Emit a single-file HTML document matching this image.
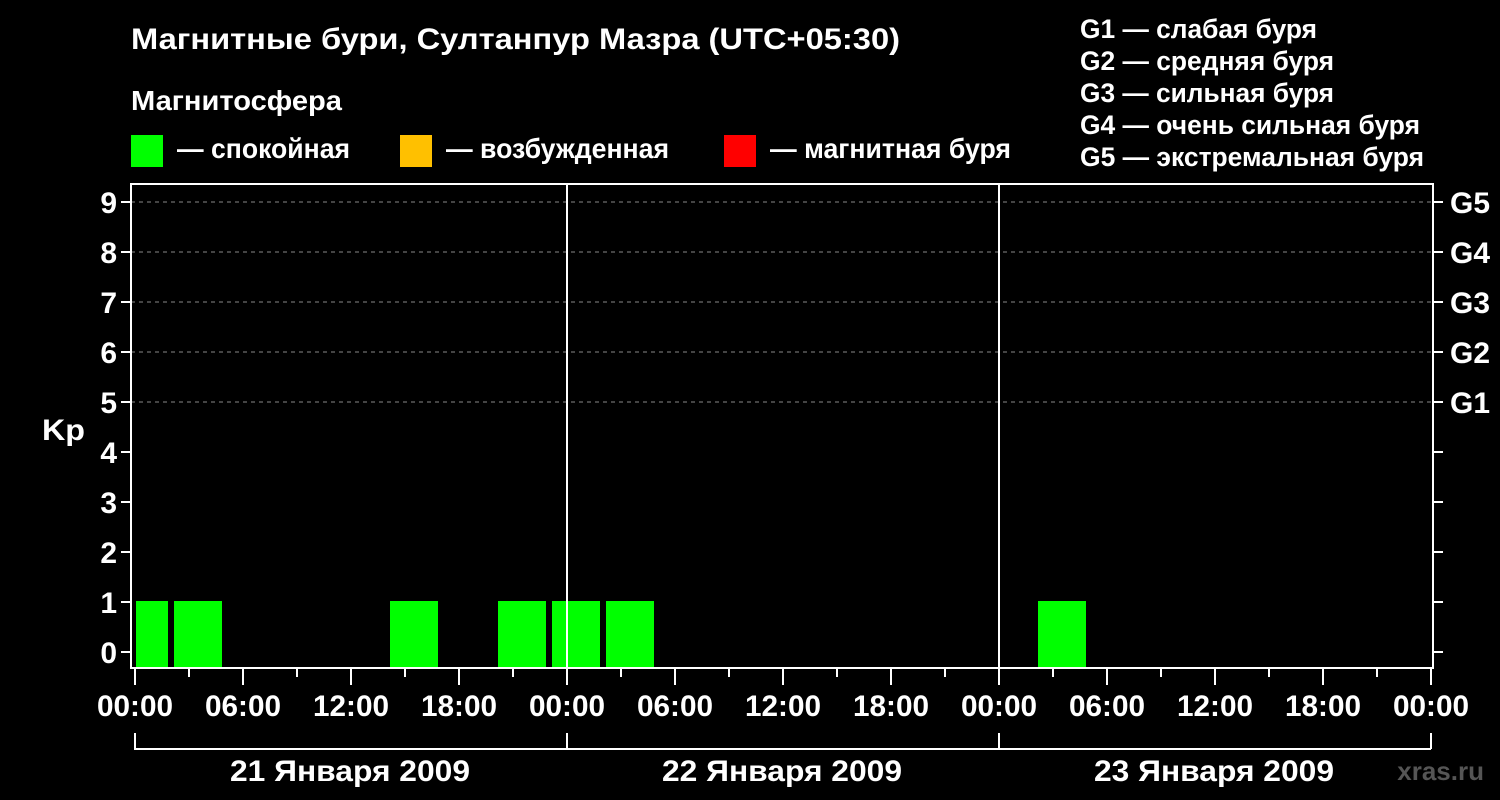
<!DOCTYPE html>
<html><head><meta charset="utf-8"><style>
html,body{margin:0;padding:0;background:#000;width:1500px;height:800px;overflow:hidden}
svg{display:block}
text{font-family:"Liberation Sans",sans-serif;font-weight:bold;fill:#fff}
</style></head><body>
<svg width="1500" height="800" xmlns="http://www.w3.org/2000/svg">
<rect width="1500" height="800" fill="#000"/>
<text x="131" y="49" font-size="30" textLength="769" lengthAdjust="spacingAndGlyphs">Магнитные бури, Султанпур Мазра (UTC+05:30)</text>
<text x="131" y="110" font-size="28" textLength="211" lengthAdjust="spacingAndGlyphs">Магнитосфера</text>
<rect x="131" y="135" width="32" height="32" fill="#00ff00"/>
<text x="177" y="158" font-size="28" textLength="173" lengthAdjust="spacingAndGlyphs">— спокойная</text>
<rect x="400" y="135" width="32" height="32" fill="#ffc000"/>
<text x="446" y="158" font-size="28" textLength="223" lengthAdjust="spacingAndGlyphs">— возбужденная</text>
<rect x="724" y="135" width="32" height="32" fill="#ff0000"/>
<text x="770" y="158" font-size="28" textLength="241" lengthAdjust="spacingAndGlyphs">— магнитная буря</text>
<g font-size="27">
<text x="1080" y="38" textLength="237" lengthAdjust="spacingAndGlyphs">G1 — слабая буря</text>
<text x="1080" y="70" textLength="254" lengthAdjust="spacingAndGlyphs">G2 — средняя буря</text>
<text x="1080" y="102" textLength="254" lengthAdjust="spacingAndGlyphs">G3 — сильная буря</text>
<text x="1080" y="134" textLength="340" lengthAdjust="spacingAndGlyphs">G4 — очень сильная буря</text>
<text x="1080" y="166" textLength="344" lengthAdjust="spacingAndGlyphs">G5 — экстремальная буря</text>
</g>
<g stroke="#888" stroke-dasharray="4,4" stroke-width="1">
<line x1="131" x2="1433" y1="202" y2="202"/>
<line x1="131" x2="1433" y1="252" y2="252"/>
<line x1="131" x2="1433" y1="302" y2="302"/>
<line x1="131" x2="1433" y1="352" y2="352"/>
<line x1="131" x2="1433" y1="402" y2="402"/>
</g>
<g fill="#00ff00">
<rect x="136" y="601" width="32" height="67"/>
<rect x="174" y="601" width="48" height="67"/>
<rect x="390" y="601" width="48" height="67"/>
<rect x="498" y="601" width="48" height="67"/>
<rect x="552" y="601" width="48" height="67"/>
<rect x="606" y="601" width="48" height="67"/>
<rect x="1038" y="601" width="48" height="67"/>
</g>
<g stroke="#fff" stroke-width="2" fill="none">
<rect x="131" y="184" width="1302" height="484"/>
<line x1="567" x2="567" y1="184" y2="668"/>
<line x1="999" x2="999" y1="184" y2="668"/>
<path d="M121 652H131M121 602H131M121 552H131M121 502H131M121 452H131M121 402H131M121 352H131M121 302H131M121 252H131M121 202H131"/>
<path d="M1433 652H1443M1433 602H1443M1433 552H1443M1433 502H1443M1433 452H1443M1433 402H1443M1433 352H1443M1433 302H1443M1433 252H1443M1433 202H1443"/>
<path d="M135 668V685M243 668V685M351 668V685M459 668V685M567 668V685M675 668V685M783 668V685M891 668V685M999 668V685M1107 668V685M1215 668V685M1323 668V685M1431 668V685"/>
<path d="M189 668V677M297 668V677M405 668V677M513 668V677M621 668V677M729 668V677M837 668V677M945 668V677M1053 668V677M1161 668V677M1269 668V677M1377 668V677"/>
<path d="M135 733V749H1431M567 733V749M999 733V749M1431 733V749"/>
</g>
<g font-size="30" text-anchor="end">
<text x="117" y="663">0</text><text x="117" y="613">1</text><text x="117" y="563">2</text>
<text x="117" y="513">3</text><text x="117" y="463">4</text><text x="117" y="413">5</text>
<text x="117" y="363">6</text><text x="117" y="313">7</text><text x="117" y="263">8</text><text x="117" y="213">9</text>
</g>
<text x="42" y="440" font-size="30" textLength="43" lengthAdjust="spacingAndGlyphs">Kp</text>
<g font-size="30">
<text x="1450" y="413" textLength="40" lengthAdjust="spacingAndGlyphs">G1</text><text x="1450" y="363" textLength="40" lengthAdjust="spacingAndGlyphs">G2</text><text x="1450" y="313" textLength="40" lengthAdjust="spacingAndGlyphs">G3</text>
<text x="1450" y="263" textLength="40" lengthAdjust="spacingAndGlyphs">G4</text><text x="1450" y="213" textLength="40" lengthAdjust="spacingAndGlyphs">G5</text>
</g>
<g font-size="30">
<text x="97" y="716" textLength="76" lengthAdjust="spacingAndGlyphs">00:00</text><text x="205" y="716" textLength="76" lengthAdjust="spacingAndGlyphs">06:00</text><text x="313" y="716" textLength="76" lengthAdjust="spacingAndGlyphs">12:00</text><text x="421" y="716" textLength="76" lengthAdjust="spacingAndGlyphs">18:00</text>
<text x="529" y="716" textLength="76" lengthAdjust="spacingAndGlyphs">00:00</text><text x="637" y="716" textLength="76" lengthAdjust="spacingAndGlyphs">06:00</text><text x="745" y="716" textLength="76" lengthAdjust="spacingAndGlyphs">12:00</text><text x="853" y="716" textLength="76" lengthAdjust="spacingAndGlyphs">18:00</text>
<text x="961" y="716" textLength="76" lengthAdjust="spacingAndGlyphs">00:00</text><text x="1069" y="716" textLength="76" lengthAdjust="spacingAndGlyphs">06:00</text><text x="1177" y="716" textLength="76" lengthAdjust="spacingAndGlyphs">12:00</text><text x="1285" y="716" textLength="76" lengthAdjust="spacingAndGlyphs">18:00</text>
<text x="1393" y="716" textLength="76" lengthAdjust="spacingAndGlyphs">00:00</text>
<text x="230" y="781" textLength="240" lengthAdjust="spacingAndGlyphs">21 Января 2009</text>
<text x="662" y="781" textLength="240" lengthAdjust="spacingAndGlyphs">22 Января 2009</text>
<text x="1094" y="781" textLength="240" lengthAdjust="spacingAndGlyphs">23 Января 2009</text>
</g>
<text x="1484" y="780" font-size="26" text-anchor="end" style="fill:#555">xras.ru</text>
</svg>
</body></html>
